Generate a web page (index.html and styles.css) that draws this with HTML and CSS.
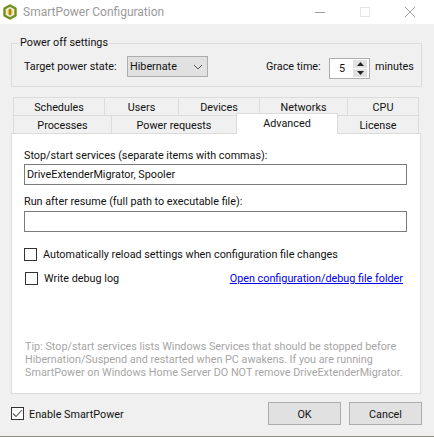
FILE: index.html
```html
<!DOCTYPE html>
<html lang="en">
  <head>
    <meta charset="UTF-8" />
    <title>SmartPower Configuration</title>
    <link rel="stylesheet" href="styles.css">
  </head>
  <body>
    <div class="window">
      <div class="titlebar">
        <svg class="app-icon" width="16" height="16" viewBox="0 0 16 16">
          <path d="M8 1.5 L13.5 4.5 V11.5 L8 14.5 L2.5 11.5 V4.5 Z" fill="#f3f0d8" stroke="#6f8f1e" stroke-width="2.4" stroke-linejoin="round"/>
          <rect x="5.6" y="5" width="4.8" height="6" rx="2" fill="#e8b82e"/>
          <rect x="7.5" y="4.6" width="1" height="6.8" fill="#6b5a1e"/>
        </svg>
        <span class="title">SmartPower Configuration</span>
        <div class="win-controls">
          <svg class="win-min" width="10" height="10" viewBox="0 0 10 10"><path d="M0 5.5 H10" stroke="#a0a0a0"/></svg>
          <svg class="win-max" width="10" height="10" viewBox="0 0 10 10"><rect x="0.5" y="0.5" width="9" height="9" fill="none" stroke="#e6e6e6"/></svg>
          <svg class="win-close" width="10" height="10" viewBox="0 0 10 10"><path d="M0 0 L10 10 M10 0 L0 10" stroke="#a0a0a0"/></svg>
        </div>
      </div>

      <div class="content">
        <fieldset class="group">
          <legend>Power off settings</legend>
          <div class="group-row">
            <span class="lbl-target">Target power state:</span>
            <div class="combo">
              <span>Hibernate</span>
              <svg width="10" height="6" viewBox="0 0 10 6"><path d="M1 1 L5 5 L9 1" fill="none" stroke="#555"/></svg>
            </div>
            <span class="lbl-grace">Grace time:</span>
            <div class="spin">
              <span class="spin-val">5</span>
              <div class="spin-btns">
                <div class="spin-btn"><svg width="7" height="4" viewBox="0 0 7 4"><path d="M3.5 0 L7 4 H0 Z" fill="#222"/></svg></div>
                <div class="spin-btn"><svg width="7" height="4" viewBox="0 0 7 4"><path d="M0 0 H7 L3.5 4 Z" fill="#222"/></svg></div>
              </div>
            </div>
            <span class="lbl-min">minutes</span>
          </div>
        </fieldset>

        <div class="tabs">
          <div class="tab-row">
            <div class="tab t-sched">Schedules</div>
            <div class="tab t-users">Users</div>
            <div class="tab t-dev">Devices</div>
            <div class="tab t-net">Networks</div>
            <div class="tab t-cpu">CPU</div>
          </div>
          <div class="tab-row row-front">
            <div class="tab t-proc">Processes</div>
            <div class="tab t-req">Power requests</div>
            <div class="tab t-adv on">Advanced</div>
            <div class="tab t-lic">License</div>
          </div>
        </div>

        <div class="panel">
          <label class="field-lbl">Stop/start services (separate items with commas):</label>
          <div class="textbox">DriveExtenderMigrator, Spooler</div>
          <label class="field-lbl second">Run after resume (full path to executable file):</label>
          <div class="textbox"></div>
          <div class="check-row first-check">
            <span class="check"></span>
            <span class="check-lbl">Automatically reload settings when configuration file changes</span>
          </div>
          <div class="check-row debug-row">
            <span class="check"></span>
            <span class="check-lbl">Write debug log</span>
            <a class="link check-lbl" href="#">Open configuration/debug file folder</a>
          </div>
          <p class="tip">Tip: Stop/start services lists Windows Services that should be stopped before<br>Hibernation/Suspend and restarted when PC awakens. If you are running<br>SmartPower on Windows Home Server DO NOT remove DriveExtenderMigrator.</p>
        </div>

        <div class="footer">
          <div class="check-row enable">
            <span class="check">
              <svg width="11" height="9" viewBox="0 0 11 9"><path d="M1 4.5 L4 7.5 L10 1" fill="none" stroke="#555" stroke-width="1.1"/></svg>
            </span>
            <span class="check-lbl">Enable SmartPower</span>
          </div>
          <div class="btn ok">OK</div>
          <div class="btn">Cancel</div>
        </div>
      </div>
    </div>
  </body>
</html>
```

FILE: styles.css
```css
* {
  margin: 0;
  padding: 0;
  box-sizing: border-box;
}
html,
body {
  width: 434px;
  height: 437px;
  overflow: hidden;
}
body {
  background: #f0f0f0;
  color: #111;
  font-family: Roboto, "Liberation Sans", sans-serif;
  font-size: 10.8px;
  line-height: 14px;
  white-space: nowrap;
}
.window {
  height: 437px;
  display: flex;
  flex-direction: column;
  border-bottom: 1px solid #8f8f7f;
}
.titlebar {
  height: 24px;
  flex: none;
  background: #fff;
  display: flex;
  align-items: center;
  padding-left: 2px;
}
.app-icon {
  flex: none;
}
.title {
  margin-left: 5px;
  color: #9a9a9a;
  font-size: 12px;
}
.win-controls {
  margin-left: auto;
  width: 119px;
  padding-right: 19px;
  display: flex;
  justify-content: space-between;
}
.content {
  flex: 1;
  padding: 12px 12px 0 11px;
}
.group {
  height: 51px;
  border: 1px solid #dcdcdc;
}
.group legend {
  margin-left: 7px;
  padding: 0 1px;
}
.group-row {
  display: flex;
  align-items: flex-start;
  margin-top: 6px;
  padding-left: 12px;
}
.lbl-target {
  width: 103px;
  line-height: 21px;
}
.combo {
  width: 81px;
  height: 21px;
  border: 1px solid #adadad;
  background: #e1e1e1;
  display: flex;
  align-items: center;
  justify-content: space-between;
  padding: 0 4px 0 2px;
}
.lbl-grace {
  width: 63px;
  margin-left: 58px;
  line-height: 21px;
}
.spin {
  width: 41px;
  height: 21px;
  margin-top: 2px;
  border: 1px solid #adadad;
  background: #fff;
  display: flex;
  justify-content: space-between;
  padding: 1px;
}
.spin-val {
  padding-left: 8px;
  line-height: 17px;
}
.spin-btns {
  width: 14px;
  margin-right: 1px;
  display: flex;
  flex-direction: column;
  gap: 1px;
  background: #fff;
}
.spin-btn {
  flex: 1;
  background: #e1e1e1;
  display: flex;
  align-items: center;
  justify-content: center;
}
.lbl-min {
  margin-left: 5px;
  line-height: 21px;
}
.tabs {
  margin: 10px 1px 0 2px;
}
.tab-row {
  display: flex;
  height: 18px;
  align-items: flex-end;
}
.tab {
  height: 18px;
  padding-top: 1px;
  text-align: center;
  line-height: 18px;
  background: #f0f0f0;
  border: 1px solid #dcdcdc;
  border-bottom: 0;
  margin-right: -1px;
}
.t-sched { width: 92px; }
.t-users { width: 75px; }
.t-dev { width: 82px; }
.t-net { width: 89px; }
.t-cpu { width: 72px; }
.t-proc { width: 99px; }
.t-req { width: 126px; }
.t-adv { width: 102px; }
.t-lic { width: 82px; }
.tab.on {
  background: #fff;
  height: 21px;
  margin-bottom: -1px;
  position: relative;
  z-index: 1;
}
.panel {
  width: 410px;
  height: 261px;
  background: #fff;
  border: 1px solid #dcdcdc;
  padding: 15px 12px 0 12px;
}
.field-lbl {
  display: block;
  height: 14px;
}
.field-lbl.second {
  margin-top: 10px;
  margin-bottom: 2px;
}
.textbox {
  width: 383px;
  height: 21px;
  margin-top: 1px;
  border: 1px solid #7a7a7a;
  line-height: 19px;
  padding-left: 2px;
  background: #fff;
}
.check-row {
  display: flex;
  align-items: center;
}
.check {
  width: 13px;
  height: 13px;
  flex: none;
  margin-right: 6px;
  border: 1px solid #333;
  background: #fff;
  display: flex;
  align-items: center;
  justify-content: center;
}
.check-lbl {
  margin-top: 1px;
  margin-bottom: -1px;
}
.first-check {
  margin-top: 15px;
}
.debug-row {
  margin-top: 10px;
  margin-left: 1px;
}
.link {
  margin-left: auto;
  margin-right: 5px;
  color: #0000ee;
}
.tip {
  margin-top: 55px;
  margin-left: 1px;
  line-height: 13px;
  color: #a6a6a6;
}
.footer {
  margin-top: 8px;
  display: flex;
  align-items: center;
  gap: 8px;
}
.enable {
  margin-right: auto;
}
.enable .check {
  margin-right: 5px;
}
.btn {
  width: 73px;
  height: 23px;
  border: 1px solid #adadad;
  background: #e1e1e1;
  text-align: center;
  line-height: 23px;
}
```
